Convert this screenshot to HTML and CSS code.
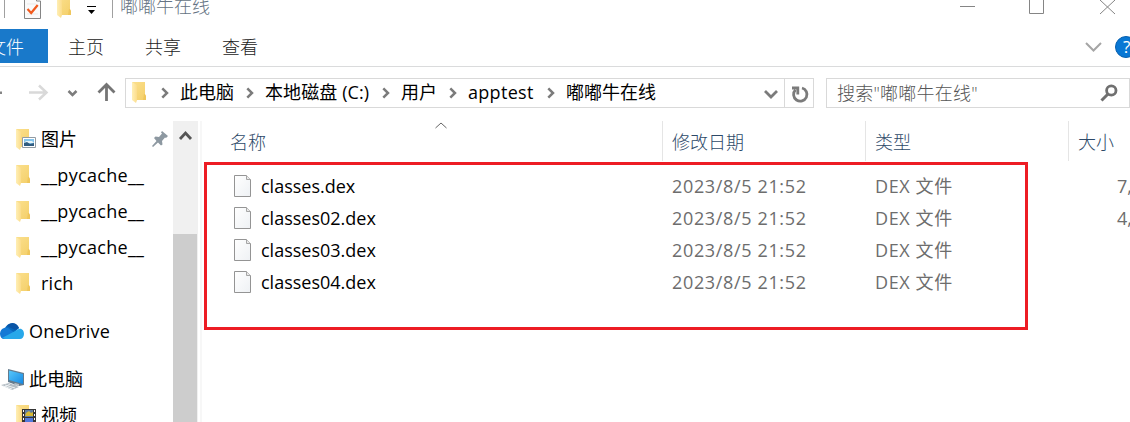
FILE: index.html
```html
<!DOCTYPE html>
<html lang="zh-CN">
<head>
<meta charset="utf-8">
<title>嘟嘟牛在线</title>
<link rel="stylesheet" href="styles.css">
</head>
<body>
<svg class="defs" width="0" height="0" aria-hidden="true">
  <defs>
    <linearGradient id="fold" x1="0" x2="1" y1="0" y2="1"><stop offset="0" stop-color="#fbe08e"/><stop offset="1" stop-color="#f4cf69"/></linearGradient>
    <linearGradient id="flap" x1="0" x2="1"><stop offset="0" stop-color="#ffefb5"/><stop offset="1" stop-color="#fbdc8b"/></linearGradient>
    <linearGradient id="paper" x1="0" x2="1" y1="0" y2="1"><stop offset="0" stop-color="#fff"/><stop offset="1" stop-color="#eef1f4"/></linearGradient>
    <linearGradient id="screen" x1="0" x2="1" y1="0" y2="1"><stop offset="0" stop-color="#57c7fb"/><stop offset="1" stop-color="#1689e3"/></linearGradient>
  </defs>
  <symbol id="folder" viewBox="0 0 14 21"><path fill="url(#fold)" d="M0 0h13v13l1 1v4H3z"/><path fill="#efc65c" d="M12 12h1l1 2v4h-3z"/><path fill="url(#flap)" d="M0 0l5 3v15l-1 3-4-3z"/></symbol>
  <symbol id="chev" viewBox="0 0 8 12"><path fill="none" stroke="#7b7b7b" stroke-width="2.5" d="M1.3 1.3L6 6l-4.700 4.700"/></symbol>
  <symbol id="file" viewBox="0 0 17 22"><path fill="url(#paper)" stroke="#949494" d="M.5.5h12l4 4v17H.5z"/><path fill="#e9e9e9" stroke="#a5a5a5" d="M12.5.5v4h4"/></symbol>
</svg>

<header class="titlebar">
  <i class="sep first"></i>
  <svg class="check" width="18" height="19" viewBox="0 0 18 19"><path fill="#fafafa" stroke="#858585" d="M.5-3v21.500h16V1h-4v-4"/><path fill="none" stroke="#e9e9e9" d="M3 4h9M3 14h11"/><path fill="none" stroke="#f15a1d" stroke-width="2.200" d="M3.500 9l3.700 4 6.500-8"/></svg>
  <svg class="qfolder" width="14" height="21"><use href="#folder"/></svg>
  <svg class="qmenu" width="9" height="9" viewBox="0 0 9 9"><path d="M0 0h9v1H0zM1 4h7L4.500 8z"/></svg>
  <i class="sep second"></i>
  <span class="title">嘟嘟牛在线</span>
  <svg class="winctl" width="156" height="16" viewBox="0 0 156 16"><path fill="none" stroke="#858585" d="M0 6.500h15M69.500-1v14.500h14V-1M140 0l15 14M155 0l-15 14"/></svg>
</header>

<nav class="tabs">
  <span class="tab file-tab">文件</span>
  <span class="tab">主页</span>
  <span class="tab">共享</span>
  <span class="tab">查看</span>
  <svg class="ribbon-tools" width="45" height="24" viewBox="0 0 45 24"><path fill="none" stroke="#a5a5a5" stroke-width="2" d="M1 8l7.500 7.500L16 8"/><circle cx="41" cy="12" r="10.500" fill="#0877d4" stroke="#075fae"/><text x="38" y="18" class="help">?</text></svg>
</nav>

<div class="address-row">
  <svg class="navs" width="125" height="30" viewBox="0 0 125 30"><path fill="#858585" d="M0 13.500h2v2.500H0z"/><g fill="none"><path stroke="#d9d9d9" stroke-width="2.500" d="M29 14.500h17.500M39 7.500l7.500 7-7.500 7"/><path stroke="#7c7c7c" stroke-width="2.500" d="M68.500 13l4 4 4-4"/><path stroke="#757575" stroke-width="2.800" d="M106.500 23V7M98.500 14.500l8-8 8 8"/></g></svg>
  <div class="address">
    <svg class="afolder" width="14" height="21"><use href="#folder"/></svg>
    <svg class="chev" width="8" height="12"><use href="#chev"/></svg><span class="crumb pc">此电脑</span>
    <svg class="chev" width="8" height="12"><use href="#chev"/></svg><span class="crumb disk">本地磁盘 (C:)</span>
    <svg class="chev" width="8" height="12"><use href="#chev"/></svg><span class="crumb users">用户</span>
    <svg class="chev" width="8" height="12"><use href="#chev"/></svg><span class="crumb app">apptest</span>
    <svg class="chev" width="8" height="12"><use href="#chev"/></svg><span class="crumb">嘟嘟牛在线</span>
    <svg class="addr-tools" width="51" height="28" viewBox="0 0 51 28"><g fill="none" stroke="#7b7b7b" stroke-width="2.800"><path d="M3 12l6 6 6-6"/><path d="M40 9a6.700 6.700 0 1 1-6.500 1.800"/><path d="M30 9h5.800v6.500"/></g><path stroke="#d9d9d9" d="M22.500 0v28"/></svg>
  </div>
  <div class="search"><span>搜索"嘟嘟牛在线"</span><svg width="18" height="18" viewBox="0 0 18 18"><g fill="none" stroke="#707070"><circle cx="11.300" cy="6.500" r="4.700" stroke-width="2.800"/><path stroke-width="3" d="M8 10l-6.500 6.500"/></g></svg></div>
</div>

<main class="body">
  <aside class="tree">
    <div class="node"><svg width="21" height="21" viewBox="0 0 21 21"><use href="#folder" width="14" height="21"/><path fill="#fff" stroke="#929ba3" d="M6.500 8.500h13v10h-13z"/><path fill="#83c4ed" d="M8 10h10v7H8z"/><path fill="#e7f4f7" d="M10 12h6l2 2H8z"/><path fill="#315c80" d="M8 14l3-1 3 2 4-1v3H8z"/></svg><span>图片</span>
      <svg class="pin" width="16" height="16" viewBox="0 0 16 16"><path fill="#8d98a1" d="M10 0l6 5-2 2-1-.5-3 3.500.5 3.500-1.500 1-3-3L1 16l-1-1 4.500-5L2 7l1.500-1.500 3.500.5 3-3.500-1-1z"/></svg></div>
    <div class="node"><svg width="21" height="21"><use href="#folder" width="14" height="21"/></svg><span class="py">__pycache__</span></div>
    <div class="node"><svg width="21" height="21"><use href="#folder" width="14" height="21"/></svg><span class="py">__pycache__</span></div>
    <div class="node"><svg width="21" height="21"><use href="#folder" width="14" height="21"/></svg><span class="py">__pycache__</span></div>
    <div class="node"><svg width="21" height="21"><use href="#folder" width="14" height="21"/></svg><span class="rich">rich</span></div>
    <div class="node root"><svg width="24" height="16" viewBox="0 0 24 16"><path fill="#0767bd" d="M5 5C7 0 15-2 19 5l-5 5z"/><path fill="#0a55a6" d="M7 3c4-5 10-3 12 2l-4 2z"/><path fill="#1479d5" d="M0 11c0-4 3-7 8-6l11 8-15 3c-2 0-4-2-4-5z"/><path fill="#28a8ea" d="M2 15l15-8c4-3 7 0 7 4 0 3-2 5-4 5H5z"/></svg><span class="one">OneDrive</span></div>
    <div class="node root"><svg width="24" height="21" viewBox="0 0 24 21"><path fill="#647b8d" d="M8 0l16 4v12l-5 1-11-4z"/><path fill="url(#screen)" d="M9 1.500l14 3.500v10L9 11z"/><path fill="#b4bdc4" d="M15 14l4 1v2l-6-1zM1 16l8-2 10 4-7 3z"/><path fill="none" stroke="#edf1f3" d="M3 17l9 3M5 16l10 3M10 15l-5 3"/></svg><span>此电脑</span></div>
    <div class="node video"><svg width="21" height="21" viewBox="0 0 21 21"><use href="#folder" width="14" height="21"/><path fill="#353535" d="M6 4h14v17H6z"/><path stroke="#fff" stroke-dasharray="2 2" d="M7.500 5v16M18.500 5v16"/><path fill="#607da0" d="M9 5h8v7H9z"/><path fill="#d5b834" d="M10 8l3-2 2 2 2-1v4H9z"/><path fill="#5379dc" d="M9 13h8v8H9z"/></svg><span>视频</span></div>
  </aside>
  <div class="scroll"><svg width="24" height="30" viewBox="0 0 24 30"><path fill="none" stroke="#555" stroke-width="2.800" d="M7 19l5.500-6 5.500 6"/></svg><div class="thumb"></div></div>
  <section class="files">
    <div class="head"><span class="c-name">名称</span><span class="c">修改日期</span><span class="c">类型</span><span class="c last">大小</span>
      <svg class="sort" width="12" height="7" viewBox="0 0 12 7"><path fill="none" stroke="#666" d="M.5 6L6 1l5.500 5"/></svg></div>
    <div class="row"><svg width="17" height="22"><use href="#file"/></svg><span class="n">classes.dex</span><span class="d">2023/8/5 21:52</span><span class="t">DEX 文件</span><span class="s">7,</span></div>
    <div class="row"><svg width="17" height="22"><use href="#file"/></svg><span class="n">classes02.dex</span><span class="d">2023/8/5 21:52</span><span class="t">DEX 文件</span><span class="s">4,</span></div>
    <div class="row"><svg width="17" height="22"><use href="#file"/></svg><span class="n">classes03.dex</span><span class="d">2023/8/5 21:52</span><span class="t">DEX 文件</span></div>
    <div class="row"><svg width="17" height="22"><use href="#file"/></svg><span class="n">classes04.dex</span><span class="d">2023/8/5 21:52</span><span class="t">DEX 文件</span></div>
    <div class="marker"></div>
  </section>
</main>
</body>
</html>
```

FILE: styles.css
```css
* { box-sizing: border-box; }
body {
  margin: 0;
  width: 1130px;
  height: 422px;
  overflow: hidden;
  background: #fff;
  color: #000;
  font: 18px/26px "Open Sans", "Noto Sans CJK SC", sans-serif;
  white-space: nowrap;
}
svg { display: block; flex: none; overflow: visible; }
span { flex: none; }
.defs { position: absolute; }

.titlebar { display: flex; height: 29px; align-items: flex-start; overflow: hidden; }
.sep { width: 1px; height: 18px; background: #a0a0a0; }
.first { margin-left: 4px; }
.check { margin-left: 19px; }
.qfolder { margin: -3px 0 0 15px; }
.qmenu { margin: 6px 0 0 16px; }
.second { margin-left: 16px; }
.title { margin: -7px 0 0 7px; color: #657383; font-weight: 300; }
.winctl { margin-left: auto; margin-right: 14px; }

.tabs { display: flex; height: 38px; border-bottom: 1px solid #dadbdc; color: #222; font-weight: 300; }
.tab { height: 34px; line-height: 36px; margin-right: 41px; }
.file-tab { width: 48px; margin-right: 20px; background: #1979ca; color: #fff; display: flex; justify-content: flex-end; padding-right: 24px; }
.ribbon-tools { margin: 6px 0 0 auto; overflow: hidden; }
.help { font: 17px "Open Sans", sans-serif; fill: #fff; }

.address-row { display: flex; height: 54px; padding-top: 11px; }
.address { display: flex; align-items: center; width: 689px; height: 30px; border: 1px solid #d9d9d9; }
.afolder { margin: -1px 3px 0 6px; }
.chev { margin: 0 11px 0 12px; }
.crumb { margin-top: -2px; }
.pc { width: 54px; }
.disk { width: 105px; letter-spacing: .1px; }
.users { width: 36px; }
.app { width: 67px; letter-spacing: .3px; }
.addr-tools { margin-left: auto; }
.search { display: flex; align-items: center; justify-content: space-between; width: 304px; height: 30px; margin-left: 12px; padding: 0 11px 0 10px; border: 1px solid #d9d9d9; color: #555; font-weight: 300; letter-spacing: .25px; }

.body { display: flex; height: 301px; }
.tree { width: 173px; }
.node { display: flex; align-items: center; height: 36px; padding-left: 16px; gap: 4px; }
.py { letter-spacing: .3px; }
.rich, .one { letter-spacing: .25px; }
.pin { margin: 0 0 0 71px; }
.root { height: 48px; padding-left: 0; gap: 5px; }
.node:nth-child(6) { margin-top: 6px; }
.video { margin-top: -6px; }
.scroll { width: 25px; background: #f0f0f0; }
.scroll svg { height: 30px; margin-top: -1px; }
.thumb { width: 24px; height: 188px; margin-top: 84px; background: #cdcdcd; }
.files { position: relative; width: 930px; margin-left: 2px; border-left: 2px solid #f7f7f7; }
.head { display: flex; height: 40px; margin-bottom: 9px; color: #2d4968; line-height: 42px; font-weight: 300; }
.c-name { width: 460px; padding-left: 28px; }
.c { width: 203px; padding-left: 9px; border-left: 1px solid #e5e5e5; }
.last { width: 62px; }
.sort { position: absolute; left: 233px; top: 1px; }
.row { display: flex; align-items: center; height: 32px; padding-left: 32px; color: #6d6d6d; }
.n { width: 411px; margin-left: 10px; color: #000; }
.d { width: 203px; letter-spacing: .65px; }
.t { width: 242px; letter-spacing: .6px; }
.marker { position: absolute; left: 2px; top: 41px; width: 824px; height: 168px; border: 3px solid #ed1c24; }
```
